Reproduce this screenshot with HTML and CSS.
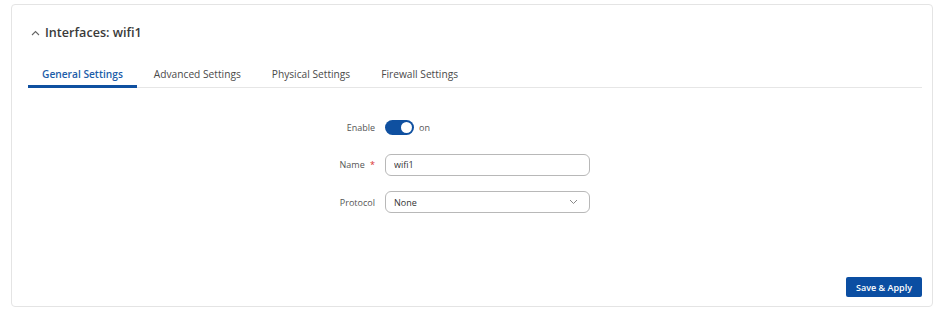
FILE: index.html
```html
<!DOCTYPE html>
<html lang="en">
<head>
  <meta charset="UTF-8" />
  <title>Interfaces: wifi1</title>
  <link rel="stylesheet" href="styles.css">
</head>
<body>
  <div class="card">
    <div class="card-header">
      <svg class="collapse" width="9" height="6" viewBox="0 0 9 6">
        <path d="M1 5 L4.5 1.5 L8 5" fill="none" stroke="#666" stroke-width="1.1"/>
      </svg>
      <h2>Interfaces: wifi1</h2>
    </div>

    <div class="tabs">
      <div class="tab active">General Settings</div>
      <div class="tab">Advanced Settings</div>
      <div class="tab">Physical Settings</div>
      <div class="tab">Firewall Settings</div>
    </div>

    <form class="form">
      <label class="label">Enable</label>
      <div class="control">
        <span class="switch"><span class="knob"></span></span>
        <span class="switch-text">on</span>
      </div>

      <label class="label">Name <span class="req">*</span></label>
      <div class="control">
        <input class="input" type="text" value="wifi1" />
      </div>

      <label class="label">Protocol</label>
      <div class="control">
        <div class="select">
          <span>None</span>
          <svg width="9" height="6" viewBox="0 0 9 6">
            <path d="M1 1 L4.5 4.5 L8 1" fill="none" stroke="#888" stroke-width="1"/>
          </svg>
        </div>
      </div>
    </form>

    <div class="card-footer">
      <button type="button" class="btn">Save &amp; Apply</button>
    </div>
  </div>
</body>
</html>
```

FILE: styles.css
```css
body {
  margin: 0;
  background: #fff;
  font-family: 'Open Sans', 'Noto Sans', sans-serif;
  color: #333;
}

.card {
  box-sizing: border-box;
  margin: 4px 0 0 11px;
  width: 922px;
  height: 303px;
  border: 1px solid #e4e4e4;
  border-radius: 4px;
  padding: 0 10px 9px 16px;
  display: flex;
  flex-direction: column;
}

.card-header {
  display: flex;
  align-items: center;
  gap: 5px;
  padding: 18px 0 0 3px;
}

.card-header h2 {
  margin: 0;
  font-size: 12.6px;
  line-height: 20px;
  font-weight: 600;
  color: #3a3a3a;
}

.tabs {
  display: flex;
  margin-top: 15px;
  border-bottom: 1px solid #e6e6e6;
}

.tab {
  font-size: 10.2px;
  line-height: 16px;
  padding: 8px 14px 3px 14px;
  color: #4a4a4a;
  border-bottom: 3px solid transparent;
  margin-bottom: -1px;
  margin-right: 3px;
}

.tab.active {
  color: #1c5da9;
  font-weight: 600;
  border-bottom-color: #0f50a0;
}

.form {
  display: grid;
  grid-template-columns: 347px 205px;
  column-gap: 10px;
  row-gap: 15.5px;
  padding-top: 28px;
}

.label {
  font-size: 9px;
  color: #555;
  text-align: right;
  align-self: center;
}

.req {
  color: #d9302c;
  margin-left: 3px;
}

.control {
  display: flex;
  align-items: center;
  height: 22px;
}

.switch {
  width: 29px;
  height: 15px;
  border-radius: 8px;
  background: #0f50a0;
  position: relative;
}

.knob {
  position: absolute;
  right: 2px;
  top: 2px;
  width: 11px;
  height: 11px;
  border-radius: 50%;
  background: #fff;
}

.switch-text {
  font-size: 9px;
  color: #555;
  margin-left: 5px;
}

.input,
.select {
  box-sizing: border-box;
  width: 205px;
  height: 22px;
  border: 1px solid #b8b8b8;
  border-radius: 6px;
  padding: 0 8px;
  font-family: inherit;
  font-size: 9px;
  color: #333;
  background: #fff;
}

.select {
  display: flex;
  align-items: center;
  justify-content: space-between;
  padding-right: 11px;
}

.card-footer {
  margin-top: auto;
  display: flex;
  justify-content: flex-end;
}

.btn {
  background: #0b4ea2;
  color: #fff;
  border: none;
  border-radius: 2px;
  font-family: inherit;
  font-size: 9px;
  font-weight: 600;
  height: 20px;
  width: 76px;
  padding: 0;
  cursor: pointer;
}
```
